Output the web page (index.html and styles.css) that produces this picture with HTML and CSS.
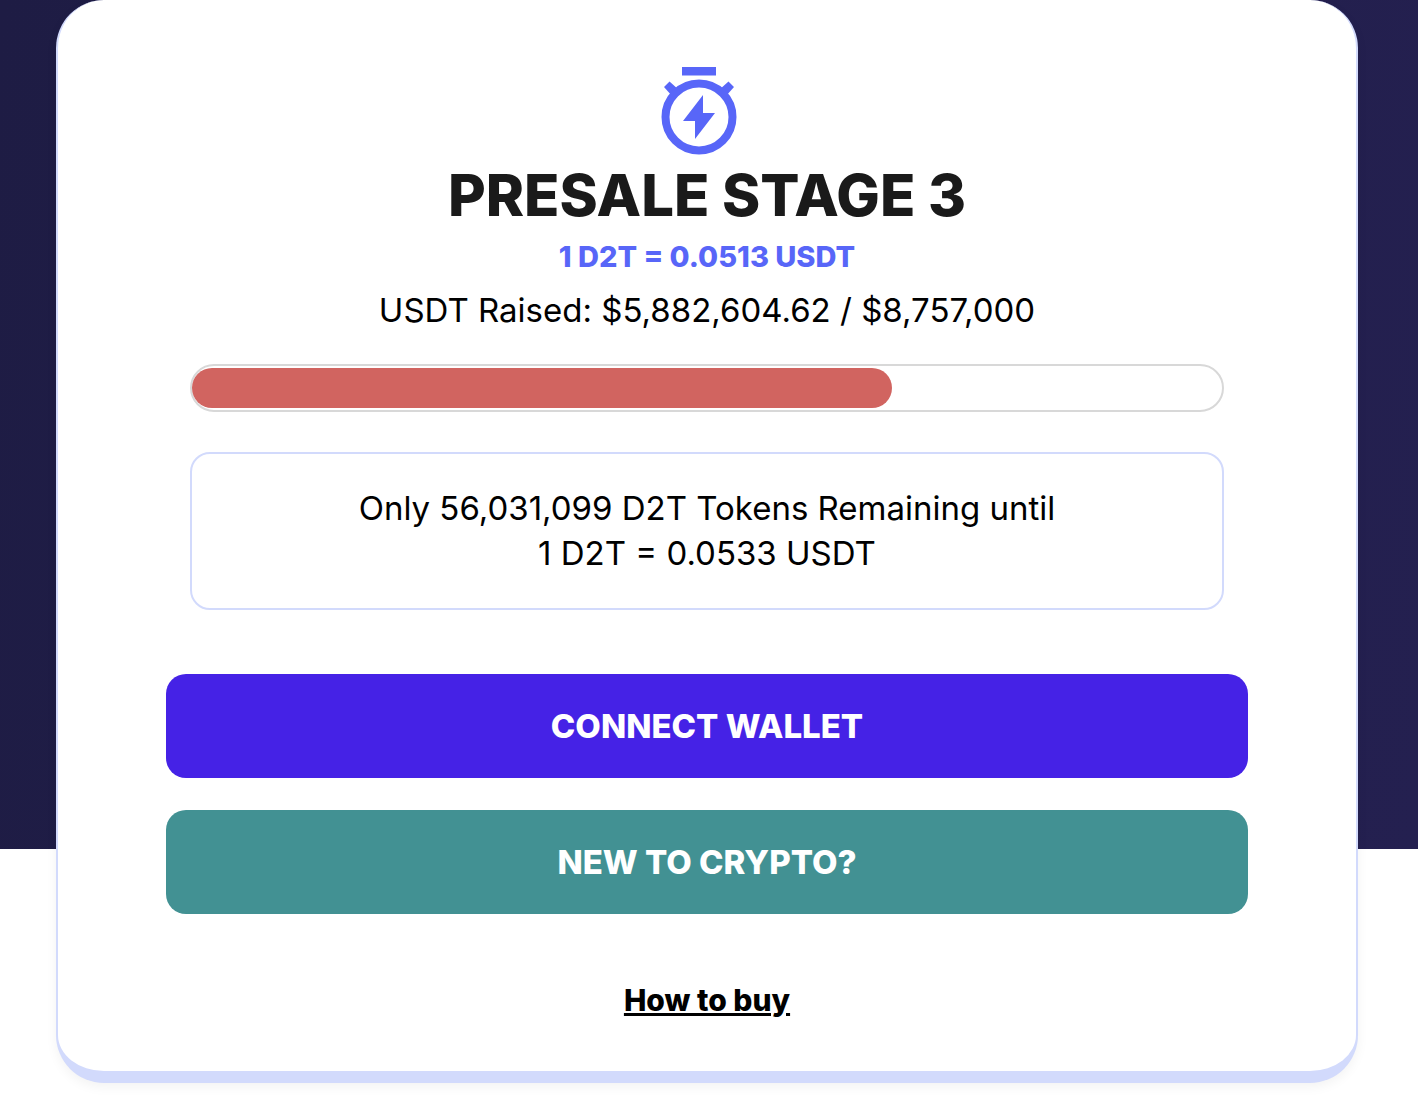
FILE: index.html
```html
<!DOCTYPE html>
<html lang="en">
<head>
  <meta charset="UTF-8" />
  <meta name="viewport" content="width=device-width, initial-scale=1.0"/>
  <title>D2T Presale</title>
  <link rel="stylesheet" href="styles.css">
</head>
<body>

<main class="presale-card">
  <!-- Stage info -->
  <svg class="timer-icon" viewBox="0 0 76 88" aria-hidden="true">
    <rect x="21" y="0" width="34" height="8.500"/>
    <path d="M8.500 14.500 L3 20 L11 29 L18 23 Z M67.500 14.500 L73 20 L65 29 L58 23 Z"/>
    <circle cx="38" cy="50" r="33.500"/>
    <path d="M42 28 L22 54 H34 V72 L54 46 H42 Z"/>
  </svg>
  <h1>PRESALE STAGE 3</h1>
  <h2>1 D2T = 0.0513 USDT</h2>
  <p class="raised">USDT Raised: $5,882,604.62 / $8,757,000</p>

  <div class="progress" role="progressbar" aria-label="USDT raised" aria-valuenow="68" aria-valuemin="0" aria-valuemax="100">
    <div class="progress-fill" style="width: 68%"></div>
  </div>

  <p class="remaining">Only 56,031,099 D2T Tokens Remaining until<br>1 D2T = 0.0533 USDT</p>

  <!-- Actions -->
  <div class="actions">
    <button type="button" class="connect-btn">CONNECT WALLET</button>
    <button type="button" class="crypto-btn">NEW TO CRYPTO?</button>
  </div>

  <a class="how-link" href="#">How to buy</a>
</main>

</body>
</html>
```

FILE: styles.css
```css
* { margin: 0; padding: 0; box-sizing: border-box; }

body {
  font-family: Inter, 'Liberation Sans', sans-serif;
  font-size: 33px;
  color: #000;
  background: #fff linear-gradient(100deg, #1e1c44, #242050) no-repeat;
  background-size: 100% 849px;
  padding: 0 60px 13px 56px;
}

.presale-card {
  display: flex;
  flex-direction: column;
  align-items: center;
  text-align: center;
  background: #fff;
  border: 2px solid #d2dafc;
  border-width: 0 2px 12px;
  border-radius: 48px;
  padding: 67px 108px 48px;
  box-shadow: 0 4px 12px rgba(0,0,0,0.05);
}

.timer-icon {
  width: 76px;
  height: 88px;
  margin-right: 16px;
  fill: #5866f8;
}

.timer-icon circle {
  fill: none;
  stroke: #5866f8;
  stroke-width: 8px;
}

h1, h2, .how-link {
  font-weight: 800;
}

h1 {
  font-size: 58px;
  line-height: 80px;
  color: #1a1a1a;
}

h2 {
  font-size: 29px;
  line-height: 44px;
  color: #5866f8;
}

.raised {
  line-height: 44px;
  margin: 9px 0 32px;
}

.progress {
  align-self: stretch;
  height: 48px;
  margin: 0 24px;
  padding: 2px 0;
  border: 2px solid #d8d8d8;
  border-radius: 24px;
}

.progress-fill {
  height: 40px;
  border-radius: 20px;
  background: #d16460;
}

.remaining {
  align-self: stretch;
  margin: 40px 24px 64px;
  padding: 32px;
  line-height: 45px;
  border: 2px solid #d2dafc;
  border-radius: 20px;
}

.actions {
  align-self: stretch;
  display: flex;
  flex-direction: column;
  gap: 32px;
}

button {
  height: 104px;
  font-family: inherit;
  font-size: 33px;
  font-weight: 800;
  color: white;
  border: none;
  border-radius: 20px;
  cursor: pointer;
}

.connect-btn { background: #4522e6; }
.crypto-btn { background: #429193; }

.how-link {
  margin-top: 64px;
  font-size: 30px;
  line-height: 45px;
  color: #000;
  text-decoration-thickness: 3px;
}
```
